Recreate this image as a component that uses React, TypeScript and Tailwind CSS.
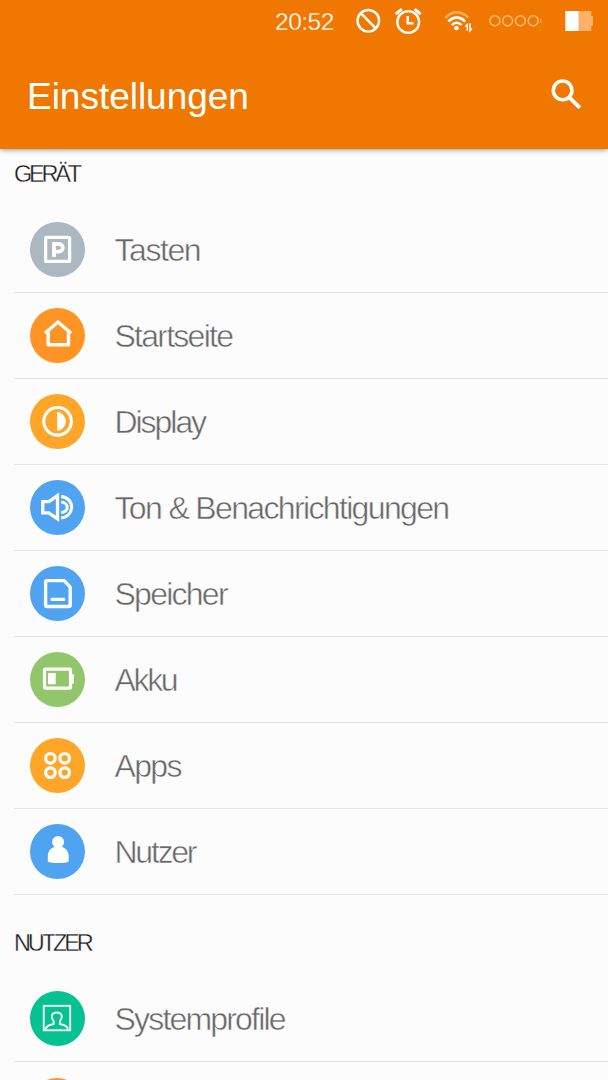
import type { ReactNode } from "react";

type Entry = {
  label: string;
  color: string;
  tracking: string;
  icon: ReactNode;
};

const device: Entry[] = [
  {
    label: "Tasten",
    color: "bg-[#abb7c1]",
    tracking: "tracking-[-1.45px]",
    icon: (
      <>
        <rect x="15.6" y="15.4" width="24" height="24" rx="1" strokeWidth="3.3" />
        <path d="M24 35V22h5a3.7 3.7 0 0 1 0 7.6h-5" strokeWidth="3.8" />
      </>
    ),
  },
  {
    label: "Startseite",
    color: "bg-[#ff9425]",
    tracking: "tracking-[-1.75px]",
    icon: <path d="M15 25.2 28 14l13.2 11.2M18.2 23.5v13.3h20.3V23.5" strokeWidth="3.4" strokeLinejoin="round" />,
  },
  {
    label: "Display",
    color: "bg-[#ffa629]",
    tracking: "tracking-[-2.05px]",
    icon: (
      <>
        <circle cx="27.6" cy="27.3" r="13.8" strokeWidth="3.1" />
        <path d="M27.2 17.8a9.6 9.6 0 0 1 0 19.1z" fill="white" stroke="none" />
      </>
    ),
  },
  {
    label: "Ton & Benachrichtigungen",
    color: "bg-[#4fa3f0]",
    tracking: "tracking-[-1.65px]",
    icon: (
      <>
        <path d="M12.8 21.6h6l8.7-6v23.2l-8.7-6h-6z" strokeWidth="3.3" />
        <path d="M31.2 16.6c6 .4 10.4 5 10.4 10.6s-4.4 10.2-10.4 10.7" strokeWidth="3.1" />
        <path d="M31.2 22.1c3.6.3 6 2.4 6 5.2s-2.4 4.9-6 5.2" strokeWidth="3" />
      </>
    ),
  },
  {
    label: "Speicher",
    color: "bg-[#4fa3f0]",
    tracking: "tracking-[-1.75px]",
    icon: (
      <>
        <path
          d="M17.2 14.6h17l6 6.5v17.8a1.6 1.6 0 0 1-1.6 1.6H17.2a1.6 1.6 0 0 1-1.6-1.6V16.2a1.6 1.6 0 0 1 1.6-1.6z"
          strokeWidth="3.4"
        />
        <path d="M22 33.4h11.8" strokeWidth="3.1" strokeLinecap="round" />
      </>
    ),
  },
  {
    label: "Akku",
    color: "bg-[#92c66b]",
    tracking: "tracking-[-2.35px]",
    icon: (
      <>
        <rect x="14.5" y="17.1" width="26" height="19" rx="0.5" strokeWidth="3.2" />
        <path d="M18 21h7.7v11.3H18zM41.5 22.3h2.3v9.4h-2.3z" fill="white" stroke="none" />
      </>
    ),
  },
  {
    label: "Apps",
    color: "bg-[#ffa629]",
    tracking: "tracking-[-1.65px]",
    icon: (
      <g strokeWidth="3.2">
        <circle cx="20.4" cy="20.3" r="4.8" />
        <circle cx="34.7" cy="20.3" r="4.8" />
        <circle cx="20.4" cy="34.6" r="4.8" />
        <circle cx="34.7" cy="34.6" r="4.8" />
      </g>
    ),
  },
  {
    label: "Nutzer",
    color: "bg-[#4fa3f0]",
    tracking: "tracking-[-2.25px]",
    icon: (
      <g fill="white" stroke="none">
        <circle cx="28.1" cy="18" r="6" />
        <path d="M17.8 37.6v-5.4c0-5 3.4-8.7 7.5-9.4h5.9c4.1.7 7.5 4.4 7.5 9.4v5.4c-3.4 2-17.5 2-20.9 0z" />
      </g>
    ),
  },
];

const user: Entry[] = [
  {
    label: "Systemprofile",
    color: "bg-[#06c293]",
    tracking: "tracking-[-1.82px]",
    icon: (
      <g strokeWidth="1.8">
        <rect x="13.7" y="14.8" width="26.5" height="24.5" />
        <path d="M15.8 38.2c0-3.4 3.3-4.2 7.9-5.2v-2.6c-3-3.8-2.6-8.9 3.1-8.9s6.1 5.1 3.1 8.9V33c4.6 1 7.9 1.8 7.9 5.2" />
      </g>
    ),
  },
];

function SettingRow({ label, color, tracking, icon }: Entry) {
  return (
    <li className="flex h-[86px] items-start border-b border-[#e4e4e4] pt-[15px] pl-4">
      <span className={`h-[54.5px] w-[54.5px] shrink-0 rounded-full ${color}`}>
        <svg viewBox="0 0 54 54" className="h-[54px] w-[54px]" fill="none" stroke="white">
          {icon}
        </svg>
      </span>
      <span
        className={`ml-[30px] text-[32px] leading-[56px] whitespace-nowrap text-[#666] [-webkit-text-stroke:0.5px_#fcfcfc] ${tracking}`}
      >
        {label}
      </span>
    </li>
  );
}

function StatusBar() {
  return (
    <div className="flex h-[42px] items-center pl-[275px]">
      <span className="w-[81px] pt-0.5 text-[24.5px] leading-[40px] tracking-[-0.5px] [-webkit-text-stroke:0.3px_#f07800]">
        20:52
      </span>
      <svg viewBox="0 0 26 26" className="h-[26px] w-[26px] shrink-0" fill="none" stroke="white" strokeWidth="2.4">
        <circle cx="12.3" cy="12.8" r="10.8" />
        <path d="m4.8 5.2 15 15.2" />
      </svg>
      <svg viewBox="0 0 28 28" className="ml-3 h-7 w-7 shrink-0" fill="none" stroke="white" strokeWidth="2.4">
        <circle cx="14.2" cy="15" r="10.9" />
        <path d="M13.7 9v7.2h5.8" />
        <path d="M1.7 7.2 7.8 2.2M26.7 7.2l-6.1-5" strokeWidth="3" />
      </svg>
      <svg viewBox="0 0 30 24" className="ml-[22px] h-6 w-[30px] shrink-0" fill="none" stroke="white">
        <path d="M1.5 8.8c6.3-7.2 16.4-7.2 22.7 0" strokeWidth="2.8" opacity="0.35" />
        <path d="M4.4 12.6c4.6-5.3 12.2-5.3 16.8 0" strokeWidth="2.6" />
        <path d="M7.8 16c2.8-3.1 7-3.1 9.8 0" strokeWidth="2.4" />
        <circle cx="12.5" cy="19" r="2.3" fill="white" stroke="none" />
        <path d="M23.3 21.8v-6.3l-2 2.1M26 14.2v7.6l2-2.2" strokeWidth="1.5" />
      </svg>
      <svg
        viewBox="0 0 56 14"
        className="ml-[14px] h-[14px] w-14 shrink-0"
        fill="none"
        stroke="#ffbd7c"
        strokeWidth="1.4"
      >
        <circle cx="6.9" cy="6.7" r="5" />
        <circle cx="19.6" cy="6.7" r="5" />
        <circle cx="32.4" cy="6.7" r="5" />
        <circle cx="45.2" cy="6.7" r="5" />
        <path d="M52.9 4.9v3.7" strokeWidth="0.8" />
      </svg>
      <svg viewBox="0 0 30 20" className="ml-[19px] h-5 w-[30px] shrink-0">
        <path d="M14 0h14.3v5H30.4v10h-2.1v5H14z" fill="#fcb068" />
        <path d="M2.3 0h13.2v20H2.3z" fill="white" />
      </svg>
    </div>
  );
}

function SectionTitle({ children, className }: { children: ReactNode; className: string }) {
  return (
    <h2 className={`text-[23.5px] leading-[27px] text-[#1c1c1c] [-webkit-text-stroke:0.3px_#fcfcfc] ${className}`}>
      {children}
    </h2>
  );
}

export default function App() {
  return (
    <div className="h-[1080px] w-[608px] overflow-hidden bg-[#fcfcfc] font-['Liberation_Sans',Arial,sans-serif]">
      <header className="relative h-[148.5px] bg-[#f07800] text-white shadow-[0_1px_5px_rgba(0,0,0,0.4)]">
        <StatusBar />
        <div className="flex h-[107px] items-center justify-between pr-[25px] pl-[27px]">
          <h1 className="pt-0.5 text-[37px] leading-[42px] font-normal tracking-[-0.02px]">Einstellungen</h1>
          <svg viewBox="0 0 34 34" className="mb-0.5 h-[34px] w-[34px]" fill="none" stroke="white">
            <circle cx="13.6" cy="12.4" r="9.3" strokeWidth="3.5" />
            <path d="m20.6 19.600 10.300 10.200" strokeWidth="4" />
          </svg>
        </div>
      </header>

      <main className="pl-[14px]">
        <SectionTitle className="h-[58.5px] pt-3 tracking-[-3.2px]">GERÄT</SectionTitle>
        <ul>
          {device.map((entry) => (
            <SettingRow key={entry.label} {...entry} />
          ))}
        </ul>
        <SectionTitle className="h-[81px] pt-[35px] tracking-[-3.1px]">NUTZER</SectionTitle>
        <ul>
          {user.map((entry) => (
            <SettingRow key={entry.label} {...entry} />
          ))}
          <li className="pt-4 pl-4">
            <span className="block h-[54px] w-[54px] rounded-full bg-[#fd913a]" />
          </li>
        </ul>
      </main>
    </div>
  );
}
